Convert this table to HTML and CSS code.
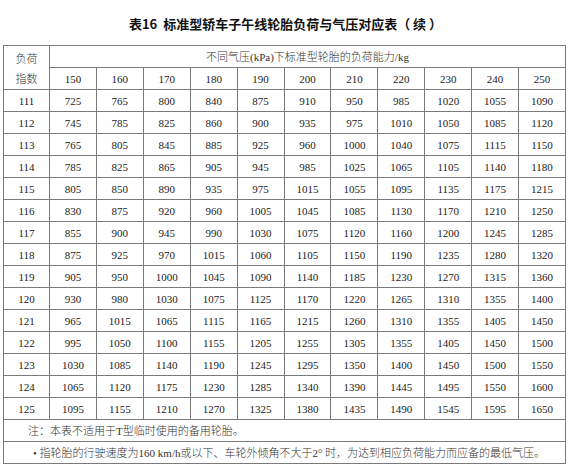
FILE: index.html
```html
<!DOCTYPE html>
<html lang="zh">
<head>
<meta charset="utf-8">
<link rel="stylesheet" href="styles.css">
</head>
<body>
<div class="page">
  <h1 class="title">表16&nbsp;&nbsp;标准型轿车子午线轮胎负荷与气压对应表（ 续 ）</h1>
  <table class="load">
    <colgroup>
      <col class="c-first">
      <col><col><col><col><col><col><col><col><col><col><col>
    </colgroup>
    <thead>
      <tr>
        <th rowspan="2" class="idx-head">负荷<br>指数</th>
        <th colspan="11" class="group">不同气压(kPa)下标准型轮胎的负荷能力/kg</th>
      </tr>
      <tr>
        <th>150</th><th>160</th><th>170</th><th>180</th><th>190</th><th>200</th><th>210</th><th>220</th><th>230</th><th>240</th><th>250</th>
      </tr>
    </thead>
    <tbody>
      <tr><td>111</td><td>725</td><td>765</td><td>800</td><td>840</td><td>875</td><td>910</td><td>950</td><td>985</td><td>1020</td><td>1055</td><td>1090</td></tr>
      <tr><td>112</td><td>745</td><td>785</td><td>825</td><td>860</td><td>900</td><td>935</td><td>975</td><td>1010</td><td>1050</td><td>1085</td><td>1120</td></tr>
      <tr><td>113</td><td>765</td><td>805</td><td>845</td><td>885</td><td>925</td><td>960</td><td>1000</td><td>1040</td><td>1075</td><td>1115</td><td>1150</td></tr>
      <tr><td>114</td><td>785</td><td>825</td><td>865</td><td>905</td><td>945</td><td>985</td><td>1025</td><td>1065</td><td>1105</td><td>1140</td><td>1180</td></tr>
      <tr><td>115</td><td>805</td><td>850</td><td>890</td><td>935</td><td>975</td><td>1015</td><td>1055</td><td>1095</td><td>1135</td><td>1175</td><td>1215</td></tr>
      <tr><td>116</td><td>830</td><td>875</td><td>920</td><td>960</td><td>1005</td><td>1045</td><td>1085</td><td>1130</td><td>1170</td><td>1210</td><td>1250</td></tr>
      <tr><td>117</td><td>855</td><td>900</td><td>945</td><td>990</td><td>1030</td><td>1075</td><td>1120</td><td>1160</td><td>1200</td><td>1245</td><td>1285</td></tr>
      <tr><td>118</td><td>875</td><td>925</td><td>970</td><td>1015</td><td>1060</td><td>1105</td><td>1150</td><td>1190</td><td>1235</td><td>1280</td><td>1320</td></tr>
      <tr><td>119</td><td>905</td><td>950</td><td>1000</td><td>1045</td><td>1090</td><td>1140</td><td>1185</td><td>1230</td><td>1270</td><td>1315</td><td>1360</td></tr>
      <tr><td>120</td><td>930</td><td>980</td><td>1030</td><td>1075</td><td>1125</td><td>1170</td><td>1220</td><td>1265</td><td>1310</td><td>1355</td><td>1400</td></tr>
      <tr><td>121</td><td>965</td><td>1015</td><td>1065</td><td>1115</td><td>1165</td><td>1215</td><td>1260</td><td>1310</td><td>1355</td><td>1405</td><td>1450</td></tr>
      <tr><td>122</td><td>995</td><td>1050</td><td>1100</td><td>1155</td><td>1205</td><td>1255</td><td>1305</td><td>1355</td><td>1405</td><td>1450</td><td>1500</td></tr>
      <tr><td>123</td><td>1030</td><td>1085</td><td>1140</td><td>1190</td><td>1245</td><td>1295</td><td>1350</td><td>1400</td><td>1450</td><td>1500</td><td>1550</td></tr>
      <tr><td>124</td><td>1065</td><td>1120</td><td>1175</td><td>1230</td><td>1285</td><td>1340</td><td>1390</td><td>1445</td><td>1495</td><td>1550</td><td>1600</td></tr>
      <tr><td>125</td><td>1095</td><td>1155</td><td>1210</td><td>1270</td><td>1325</td><td>1380</td><td>1435</td><td>1490</td><td>1545</td><td>1595</td><td>1650</td></tr>
      <tr><td colspan="12" class="note">注：本表不适用于T型临时使用的备用轮胎。</td></tr>
      <tr><td colspan="12" class="note bullet">• 指轮胎的行驶速度为160 km/h或以下、车轮外倾角不大于2° 时，为达到相应负荷能力而应备的最低气压。</td></tr>
    </tbody>
  </table>
</div>
</body>
</html>
```
FILE: styles.css
```css
html, body {
  margin: 0;
  padding: 0;
  background: #ffffff;
}

.page {
  padding: 13px 0 0 3px;
  width: 563px;
}

.title {
  margin: 0 0 11px 0;
  font-family: "Noto Sans CJK SC", "DejaVu Sans", sans-serif;
  font-size: 13px;
  font-weight: 700;
  line-height: 21px;
  text-align: center;
  color: #111;
  padding-left: 2px;
}

.load {
  width: 563px;
  border-collapse: collapse;
  table-layout: fixed;
  font-family: "Liberation Serif", "Noto Sans CJK SC", serif;
  font-size: 11px;
  color: #222;
  border: 1px solid #6e6e6e;
}

.c-first {
  width: 46px;
}

.load th,
.load td {
  border: 1px solid #7a7a7a;
  height: 21px;
  padding: 0;
  text-align: center;
  font-weight: 400;
  vertical-align: middle;
  line-height: 14px;
}

.load .idx-head {
  font-family: "Noto Sans CJK SC", serif;
  font-size: 11px;
  line-height: 20px;
  color: #333;
  font-weight: 300;
}

.load .group {
  font-family: "Liberation Serif", "Noto Sans CJK SC", serif;
  font-weight: 300;
  color: #333;
}

.load .note {
  text-align: left;
  padding-left: 24px;
  font-weight: 300;
  color: #333;
}

.load .bullet {
  padding-left: 29px;
}
```
